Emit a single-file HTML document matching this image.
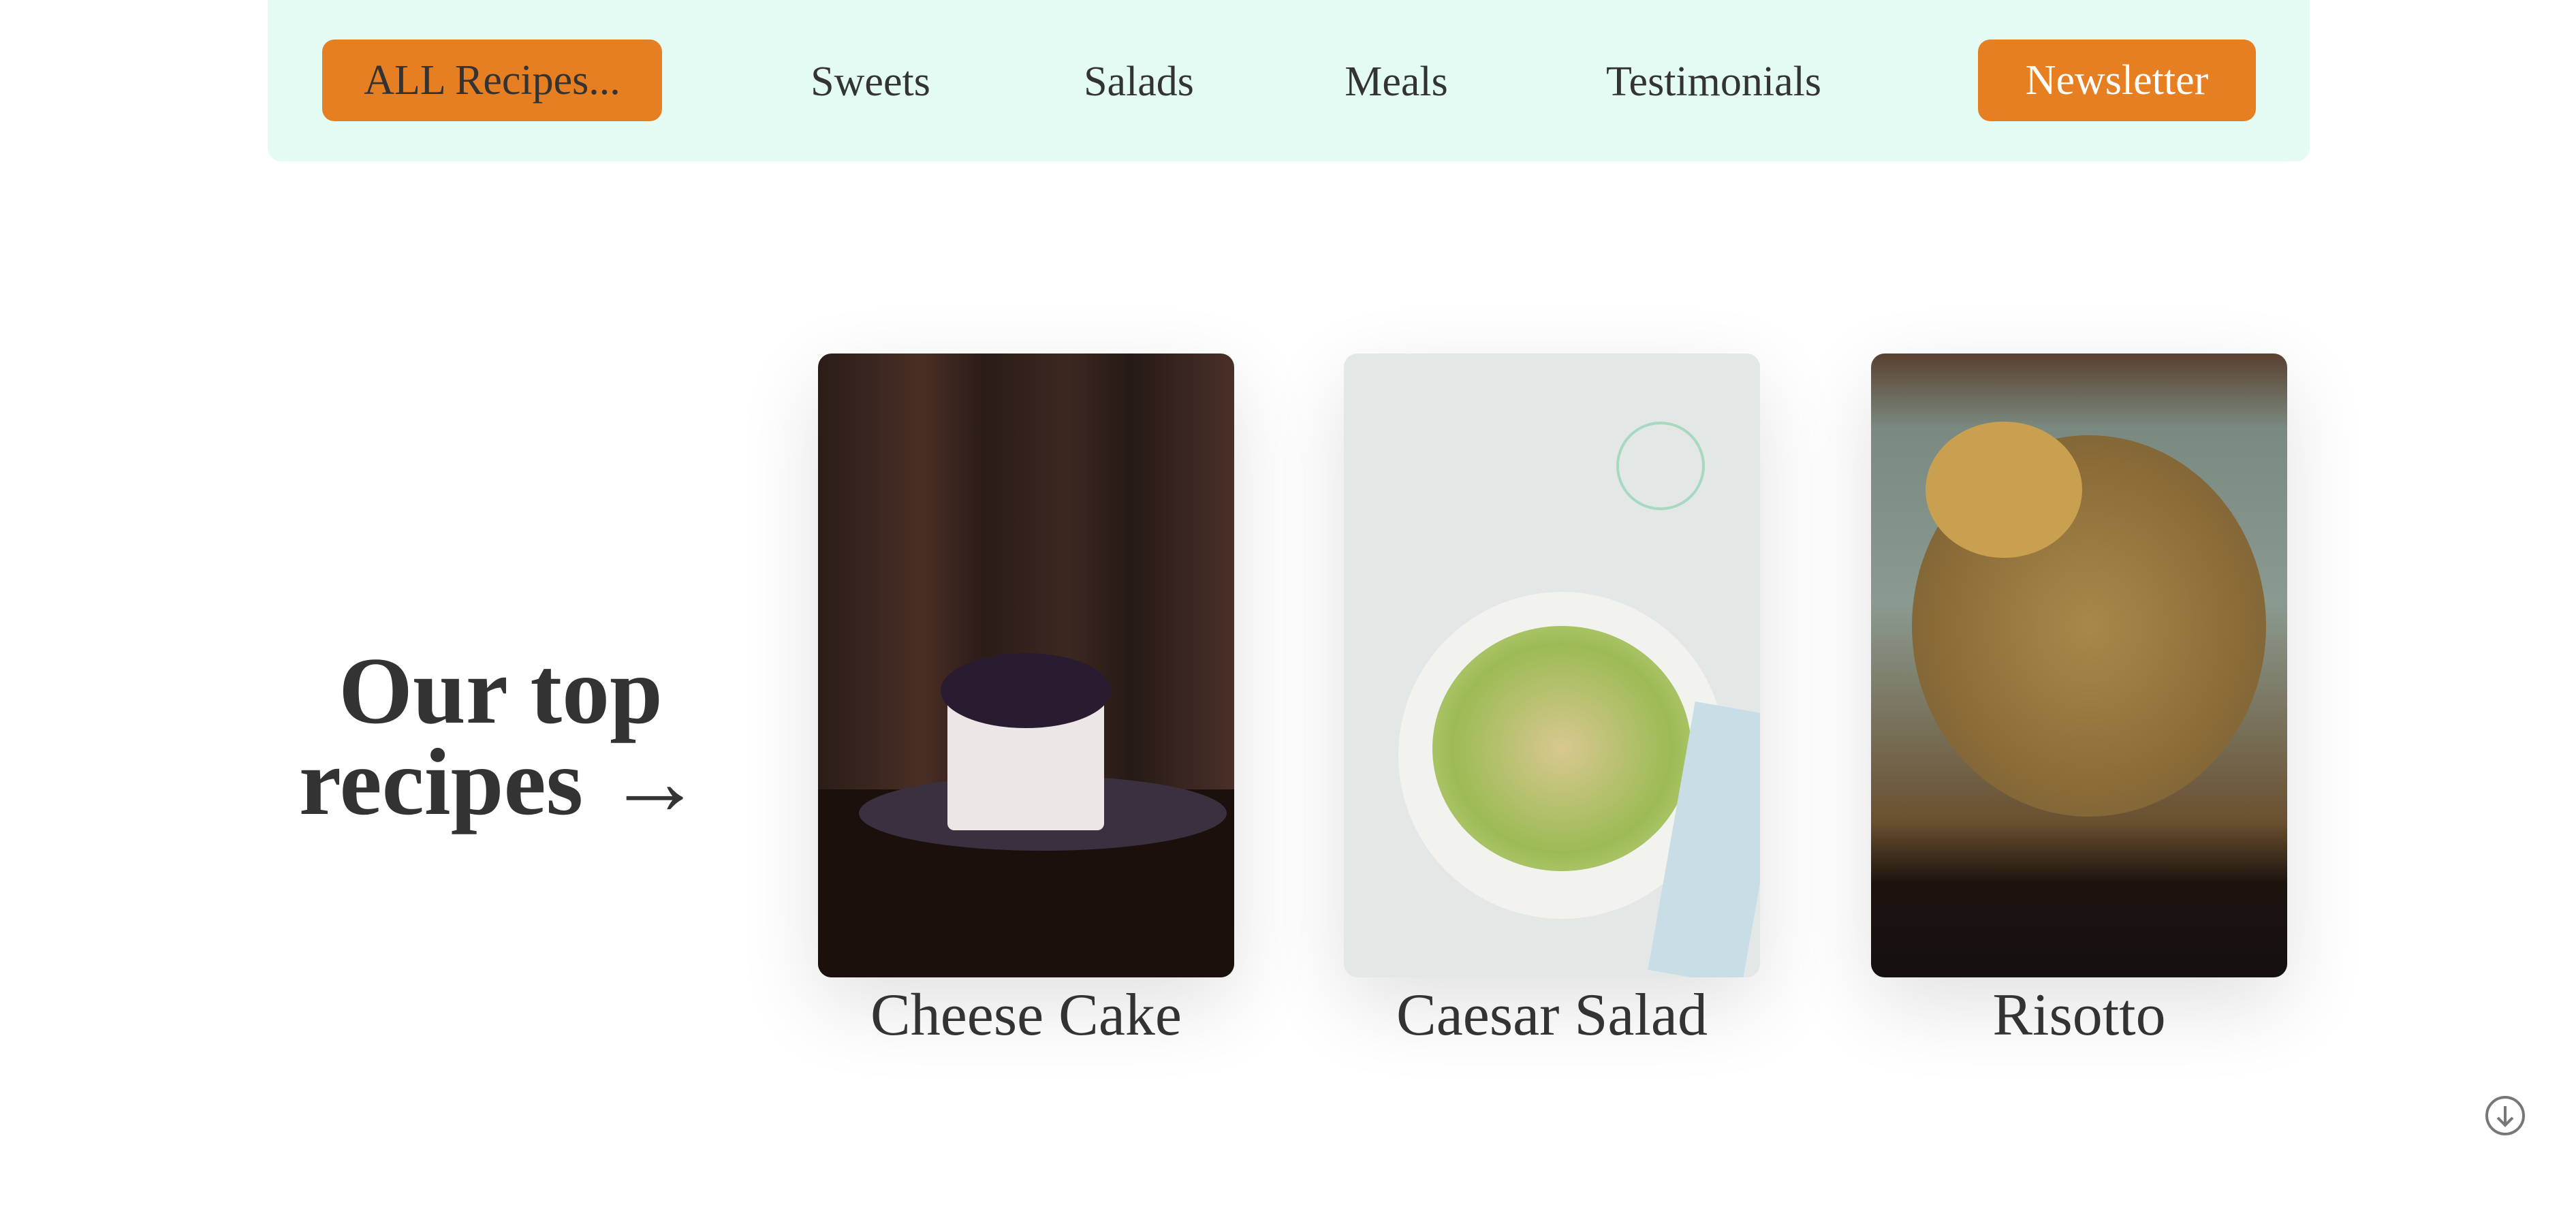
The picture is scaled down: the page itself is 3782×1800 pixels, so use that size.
<!DOCTYPE html>
<html><head><meta charset="utf-8"><style>
*{margin:0;padding:0;box-sizing:border-box}
body{width:3782px;height:1800px;background:#fff;font-family:"Liberation Serif",serif;color:#333;position:relative;overflow:hidden}
.nav{position:absolute;left:393px;top:0;width:2998px;height:237px;background:#e3fbf3;border-radius:0 0 20px 20px}
.btn{position:absolute;top:58px;height:120px;background:#e67e22;border-radius:18px;font-size:62px;display:flex;align-items:center;justify-content:center}
.lnk{position:absolute;top:80px;font-size:62px;transform:translateX(-50%);line-height:80px}
h1{position:absolute;left:380px;width:710px;top:948px;text-align:center;font-size:140px;line-height:134px;font-weight:bold}
.card{position:absolute;top:519px;width:611px;height:916px;border-radius:20px;overflow:hidden;box-shadow:0 40px 120px rgba(0,0,0,.12)}
.cap{position:absolute;top:1435px;width:611px;text-align:center;font-size:88px;line-height:112px}
</style></head><body>
<div class="nav">
<div class="btn" style="left:80px;width:499px;color:#333">ALL Recipes...</div>
<div class="lnk" style="left:885px">Sweets</div>
<div class="lnk" style="left:1279px">Salads</div>
<div class="lnk" style="left:1657px">Meals</div>
<div class="lnk" style="left:2123px">Testimonials</div>
<div class="btn" style="left:2511px;width:408px;color:#fff">Newsletter</div>
</div>
<h1>Our top<br>recipes →</h1>

<div class="card" style="left:1201px;background:linear-gradient(90deg,#2a1d18 0%,#4a2e25 25%,#2a1c17 40%,#3c2820 60%,#261a16 75%,#4a3027 100%)">
<div style="position:absolute;left:0;top:640px;width:611px;height:276px;background:#1c100d"></div>
<div style="position:absolute;left:60px;top:620px;width:540px;height:110px;border-radius:50%;background:#3a3040"></div>
<div style="position:absolute;left:190px;top:500px;width:230px;height:200px;background:#ece6e6;border-radius:10px"></div>
<div style="position:absolute;left:180px;top:440px;width:250px;height:110px;border-radius:50%;background:#2a1c30"></div>
</div>
<div class="cap" style="left:1201px">Cheese Cake</div>

<div class="card" style="left:1973px;background:#e3e7e6">
<div style="position:absolute;left:80px;top:350px;width:480px;height:480px;border-radius:50%;background:#f2f2ee"></div>
<div style="position:absolute;left:130px;top:400px;width:380px;height:360px;border-radius:50%;background:radial-gradient(#d8c890,#9cbb55 60%,#c8d890)"></div>
<div style="position:absolute;left:480px;top:520px;width:140px;height:400px;background:#c8dde6;transform:rotate(10deg)"></div>
<div style="position:absolute;left:400px;top:100px;width:130px;height:130px;border-radius:50%;border:4px solid #a8d8c0"></div>
</div>
<div class="cap" style="left:1973px">Caesar Salad</div>

<div class="card" style="left:2747px;background:linear-gradient(180deg,#5a4030 0%,#7a8a80 12%,#8a9a90 40%,#6a5030 75%,#1c130e 85%,#151010 100%)">
<div style="position:absolute;left:60px;top:120px;width:520px;height:560px;border-radius:50%;background:radial-gradient(#a8894a,#8b6c38 60%,#6e5a3a)"></div>
<div style="position:absolute;left:80px;top:100px;width:230px;height:200px;border-radius:50%;background:#c8a050"></div>
</div>
<div class="cap" style="left:2747px">Risotto</div>

<svg style="position:absolute;left:3647px;top:1607px" width="62" height="62" viewBox="0 0 62 62"><circle cx="31" cy="31" r="27" fill="none" stroke="#777" stroke-width="4"/><path d="M31 17V44M20 34l11 11 11-11" fill="none" stroke="#777" stroke-width="4"/></svg>
</body></html>
